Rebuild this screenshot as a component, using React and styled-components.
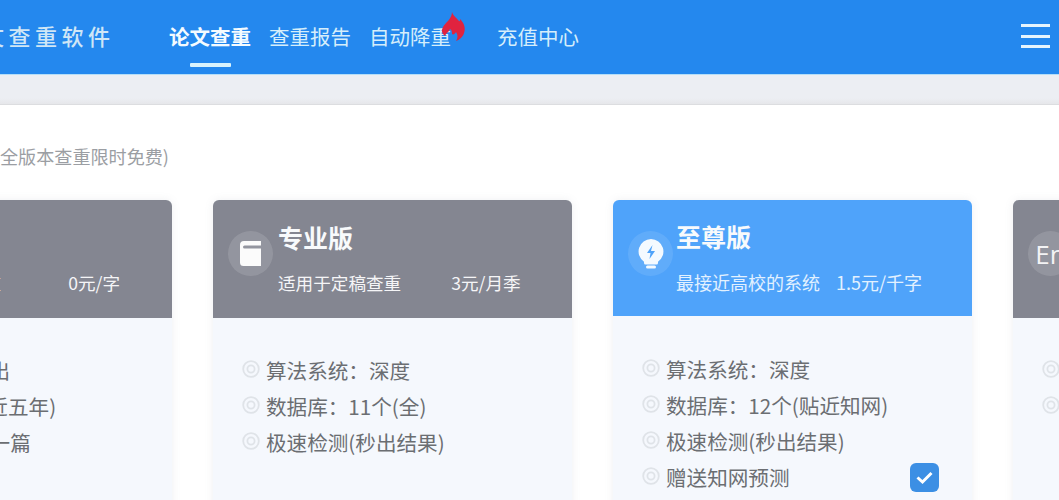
import React from 'react';
import styled, { createGlobalStyle } from 'styled-components';

const GlobalStyle = createGlobalStyle`
  html, body {
    margin: 0;
    padding: 0;
    height: 500px;
    overflow: hidden;
    background: #fff;
    font-family: "Noto Sans CJK SC", "Liberation Sans", sans-serif;
  }
`;

const Page = styled.div`
  width: 1059px;
  height: 500px;
  overflow: hidden;
`;

const Header = styled.header`
  display: flex;
  align-items: center;
  height: 74px;
  background: #2488ee;
  border-bottom: 1px solid #b5def8;
  overflow: hidden;
`;

const Logo = styled.div`
  flex: none;
  width: 170px;
  margin-left: -18px;
  padding-bottom: 4px;
  font-size: 22px;
  letter-spacing: 4.5px;
  white-space: nowrap;
  color: #cfe6f6;
  font-weight: 500;
`;

const Nav = styled.nav`
  display: flex;
  align-items: center;
  height: 100%;
  margin-left: 17px;
`;

const NavItem = styled.a`
  position: relative;
  display: flex;
  align-items: center;
  height: 100%;
  padding-bottom: 2px;
  box-sizing: border-box;
  margin-right: ${(p) => p.$gap || 18}px;
  font-size: 20.5px;
  font-weight: ${(p) => (p.$active ? 700 : 400)};
  color: ${(p) => (p.$active ? '#f4fbff' : '#d5eefb')};
  white-space: nowrap;

  ${(p) =>
    p.$active &&
    `&::after {
      content: '';
      position: absolute;
      left: 21px;
      bottom: 7px;
      width: 41px;
      height: 4px;
      border-radius: 1px;
      background: #d9f3fd;
    }`}
`;

const Flame = styled.svg`
  position: absolute;
  left: 72px;
  top: 12px;
  width: 26px;
  height: 29px;
`;

const Burger = styled.button`
  display: flex;
  flex-direction: column;
  justify-content: space-between;
  width: 29px;
  height: 24px;
  margin: 0 9px 2px auto;
  padding: 0;
  border: 0;
  background: none;

  span {
    display: block;
    height: 3px;
    background: #e6f4fd;
  }
`;

const GrayBar = styled.div`
  height: 29px;
  background: linear-gradient(#eceef3 80%, #e6e7ea);
  border-bottom: 1px solid #dcdde0;
`;

const Note = styled.p`
  margin: 0;
  height: 95px;
  padding-top: 39px;
  box-sizing: border-box;
  font-size: 18.1px;
  line-height: 24px;
  color: #9b9ea3;
  white-space: nowrap;
`;

const Cards = styled.div`
  display: flex;
  gap: 41px;
  margin-left: -187px;
`;

const Card = styled.section`
  flex: none;
  width: 359px;
  height: 320px;
  background: #f5f8fd;
  border-radius: 6px 6px 0 0;
  box-shadow: 0 0 8px rgba(120, 130, 150, 0.12);
`;

const CardHead = styled.div`
  display: flex;
  height: ${(p) => (p.$featured ? 116 : 118)}px;
  padding: 21px 0 0 15px;
  box-sizing: border-box;
  gap: ${(p) => (p.$featured ? 3 : 5)}px;
  border-radius: 6px 6px 0 0;
  background: ${(p) => (p.$featured ? '#4fa3fa' : '#848691')};
  color: #fff;
  overflow: hidden;
`;

const IconCircle = styled.div`
  flex: none;
  display: flex;
  align-items: center;
  justify-content: center;
  width: 45px;
  height: 45px;
  margin-top: 10px;
  border-radius: 50%;
  background: rgba(255, 255, 255, ${(p) => (p.$featured ? 0.1 : 0.13)});
  font-size: 26px;
  font-weight: 400;
  color: #f3f3f5;
  font-family: "Open Sans", sans-serif;
`;

const HeadText = styled.div`
  min-width: 0;
  white-space: nowrap;
`;

const Title = styled.h3`
  margin: ${(p) => (p.$featured ? -1 : 0)}px 0 0;
  font-size: 25px;
  line-height: 32px;
  font-weight: 700;
  color: #f8fafc;
`;

const Sub = styled.div`
  display: flex;
  margin-top: 18px;
  gap: ${(p) => p.$gap}px;
  font-size: ${(p) => (p.$featured ? 18 : 17.6)}px;
  line-height: 24px;
  color: ${(p) => (p.$featured ? '#e2f1ff' : '#f5f5f7')};
`;

const CardBody = styled.div`
  position: relative;
  padding: ${(p) => (p.$featured ? 35 : 34)}px 0 0 29px;
`;

const Feature = styled.div`
  display: flex;
  align-items: center;
  gap: 6px;
  height: 36px;
  font-size: 20.6px;
  color: #6b6e72;
  white-space: nowrap;
`;

const Ring = styled.svg`
  flex: none;
  width: 18px;
  height: 18px;
  margin-top: -2px;
`;

const Check = styled.div`
  position: absolute;
  right: 33px;
  top: 147px;
  display: flex;
  align-items: center;
  justify-content: center;
  width: 29px;
  height: 29px;
  border-radius: 6px;
  background: #3c8fe4;
`;

const RingIcon = () => (
  <Ring viewBox="0 0 18 18" fill="none" stroke="#dfe3e8">
    <circle cx="9" cy="9" r="7.8" strokeWidth="1.8" />
    <circle cx="9" cy="9" r="3.6" strokeWidth="1.8" />
  </Ring>
);

const BookIcon = () => (
  <svg width="21" height="25" viewBox="0 0 21 25">
    <path
      d="M4 0h17v4.500H4.500a1.500 1.500 0 0 0 0 3H21V25H3.500A3.500 3.500 0 0 1 0 21.500V4a4 4 0 0 1 4-4z"
      fill="#fbfbfb"
    />
  </svg>
);

const BulbIcon = () => (
  <svg width="26" height="30" viewBox="0 0 26 30">
    <path
      d="M13 0a12.500 12.500 0 0 1 7 22.800V24a1.500 1.500 0 0 1-1.500 1.500h-11A1.500 1.500 0 0 1 6 24v-1.200A12.500 12.500 0 0 1 13 0z"
      fill="#f4faff"
    />
    <rect x="8" y="26.500" width="10" height="3" rx="1.500" fill="#f4faff" />
    <path d="M14.500 6 9 14h3.500l-1 6 5.500-8H13z" fill="#4fa3fa" />
  </svg>
);

const plans = [
  {
    name: '基础版',
    desc: '适用于初稿查重',
    price: '0元/字',
    gap: 67,
    icon: <BookIcon />,
    items: ['查重速度：秒出', '数据库：5个(近五年)', '每天可免费查一篇'],
  },
  {
    name: '专业版',
    desc: '适用于定稿查重',
    price: '3元/月季',
    gap: 50,
    icon: <BookIcon />,
    items: ['算法系统：深度', '数据库：11个(全)', '极速检测(秒出结果)'],
  },
  {
    name: '至尊版',
    desc: '最接近高校的系统',
    price: '1.5元/千字',
    gap: 16,
    icon: <BulbIcon />,
    featured: true,
    checked: true,
    items: ['算法系统：深度', '数据库：12个(贴近知网)', '极速检测(秒出结果)', '赠送知网预测'],
  },
  {
    name: 'English',
    desc: '适用于英文论文',
    price: '',
    gap: 50,
    icon: 'En',
    items: ['算法系统：深度', '数据库：英文'],
  },
];

export default function App() {
  return (
    <Page>
      <GlobalStyle />
      <Header>
        <Logo>文查重软件</Logo>
        <Nav>
          <NavItem $active>论文查重</NavItem>
          <NavItem>查重报告</NavItem>
          <NavItem $gap={46}>
            自动降重
            <Flame viewBox="0 0 26 29">
              <path
                d="M11 0c1 4 4 5 7 9 1 1 1-1 1-2 4 4 6 9 4 14-1 4-5 7-8 8 2-3 2-6 0-9-1 2-3 3-4 2 0-2 0-4-2-5-1 3-4 4-5 7C1 21 0 19 2 15 4 11 11 7 11 0z"
                fill="#e0233f"
              />
            </Flame>
          </NavItem>
          <NavItem>充值中心</NavItem>
        </Nav>
        <Burger aria-label="menu">
          <span />
          <span />
          <span />
        </Burger>
      </Header>
      <GrayBar />
      <Note>全版本查重限时免费)</Note>
      <Cards>
        {plans.map((plan) => (
          <Card key={plan.name}>
            <CardHead $featured={plan.featured}>
              <IconCircle $featured={plan.featured}>{plan.icon}</IconCircle>
              <HeadText>
                <Title $featured={plan.featured}>{plan.name}</Title>
                <Sub $featured={plan.featured} $gap={plan.gap}>
                  <span>{plan.desc}</span>
                  <span>{plan.price}</span>
                </Sub>
              </HeadText>
            </CardHead>
            <CardBody $featured={plan.featured}>
              {plan.items.map((item) => (
                <Feature key={item}>
                  <RingIcon />
                  {item}
                </Feature>
              ))}
              {plan.checked && (
                <Check>
                  <svg width="19" height="15" viewBox="0 0 19 15" fill="none">
                    <path d="M2.500 7.500 7.500 12 16.500 3" stroke="#fff" strokeWidth="3" />
                  </svg>
                </Check>
              )}
            </CardBody>
          </Card>
        ))}
      </Cards>
    </Page>
  );
}
